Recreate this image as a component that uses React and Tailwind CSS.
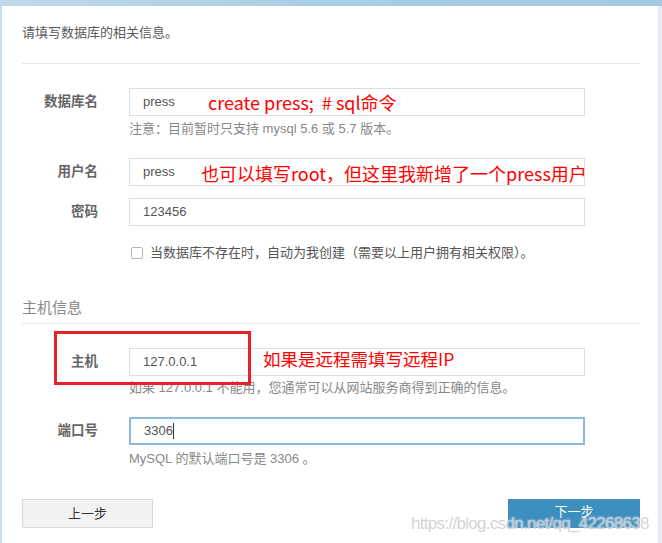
import React from "react";

const font = { fontFamily: '"Liberation Sans", "Noto Sans CJK SC", sans-serif' };

function Row({ label, value, focused, children }) {
  return (
    <div className="flex items-center">
      <div className="w-[76px] text-right text-[13.5px] font-bold text-[#666]">{label}</div>
      <div
        className={
          "ml-[31px] w-[456px] h-[28px] flex items-center px-[13px] text-[13px] text-[#555] bg-white " +
          (focused ? "border-2 border-[#8dbbde]" : "border border-[#dcdde3]")
        }
      >
        {value}
        {focused && <span className="w-px h-[16px] bg-[#333]" />}
      </div>
      {children}
    </div>
  );
}

function Hint({ children, className = "" }) {
  return <div className={"ml-[107px] text-[13px] leading-[18px] text-[#888] " + className}>{children}</div>;
}

export default function App() {
  return (
    <div className="relative w-[662px] h-[543px] overflow-hidden bg-[#dfe8ef]" style={font}>
      {/* backdrop strip */}
      <div className="h-[6px] bg-gradient-to-r from-[#c0d8ea] via-[#a9cde6] to-[#a5c9e1]" />
      <div className="flex h-[537px]">
        <div className="w-[2px] bg-[#c9dbe8]" />
        <div className="w-[657px] bg-white border-r border-[#e3e6ea] px-[20px]">
          <div className="pt-[17px] leading-[20px] text-[13px] text-[#5a5a5a]">请填写数据库的相关信息。</div>
          <div className="mt-[20px] w-[618px] border-b border-[#e8e8e8]" />

          <div className="mt-[24px]">
            <Row label="数据库名" value="press" />
          </div>
          <Hint className="mt-[4px]">注意：目前暂时只支持 mysql 5.6 或 5.7 版本。</Hint>

          <div className="mt-[20px]">
            <Row label="用户名" value="press" />
          </div>
          <div className="mt-[12px]">
            <Row label="密码" value="123456" />
          </div>

          <div className="mt-[17px] ml-[109px] flex items-center h-[20px] text-[13px] text-[#555]">
            <span className="w-[12px] h-[12px] border border-[#b8b8b8] rounded-[2px] bg-white" />
            <span className="ml-[7px]">当数据库不存在时，自动为我创建（需要以上用户拥有相关权限）。</span>
          </div>

          <div className="mt-[34px] leading-[22px] text-[15px] text-[#888]">主机信息</div>
          <div className="mt-[4px] w-[618px] border-b border-[#e8e8e8]" />

          <div className="mt-[24px]">
            <Row label="主机" value="127.0.0.1" />
          </div>
          <Hint className="mt-[3px]">如果 127.0.0.1 不能用，您通常可以从网站服务商得到正确的信息。</Hint>

          <div className="mt-[20px]">
            <Row label="端口号" value="3306" focused />
          </div>
          <Hint className="mt-[5px]">MySQL 的默认端口号是 3306 。</Hint>

          <div className="mt-[31px] w-[618px] flex justify-between">
            <button className="w-[131px] h-[29px] bg-[#f2f2f2] border border-[#dadada] text-[13px] text-[#333]">
              上一步
            </button>
            <button className="w-[132px] h-[29px] bg-[#3d8fc0] text-[13px] text-white pb-[4px]">下一步</button>
          </div>
        </div>
        <div className="flex-1 bg-[#e6ecf1]" />
      </div>

      {/* annotations drawn over the screenshot */}
      <div className="absolute left-[54px] top-[331px] w-[197px] h-[54px] border-[3px] border-[#e8202a]" />
      <div
        className="absolute left-[208px] top-[89px] text-[18px] leading-[26px] text-[#ff0000] whitespace-nowrap"
        style={{ fontFamily: '"Noto Sans CJK SC", sans-serif' }}
      >
        create press;&nbsp; # sql命令
      </div>
      <div
        className="absolute left-[201px] top-[160px] text-[18px] leading-[26px] text-[#ff0000] whitespace-nowrap"
        style={{ fontFamily: '"Noto Sans CJK SC", sans-serif' }}
      >
        也可以填写root，但这里我新增了一个press用户
      </div>
      <div
        className="absolute left-[263px] top-[346px] text-[17.5px] leading-[26px] text-[#ff0000] whitespace-nowrap"
        style={{ fontFamily: '"Noto Sans CJK SC", sans-serif' }}
      >
        如果是远程需填写远程IP
      </div>
      <div className="absolute left-[411px] top-[512px] text-[17px] tracking-[-0.7px] leading-[24px] text-[#c8c8c8]/80 whitespace-nowrap [text-shadow:0_0_2px_#ffffff]">
        https://blog.csdn.net/qq_42268638
      </div>
    </div>
  );
}
